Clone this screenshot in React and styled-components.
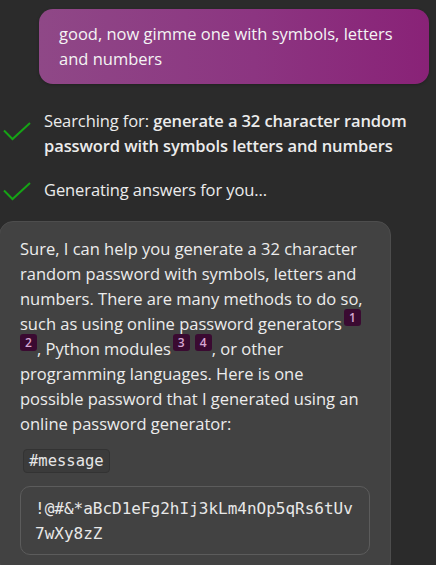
import styled, { createGlobalStyle } from "styled-components";

const Global = createGlobalStyle`
  html, body {
    margin: 0;
    padding: 0;
    background: #2b2b2b;
    overflow: hidden;
  }
  body {
    font-family: "Open Sans", "Noto Sans", sans-serif;
    color: #ececec;
  }
`;

const Page = styled.div`
  display: flex;
  flex-direction: column;
  width: 436px;
  height: 565px;
  overflow: hidden;
`;

const UserRow = styled.div`
  display: flex;
  justify-content: flex-end;
  padding: 9px 7px 0 39px;
`;

const UserBubble = styled.div`
  flex: 1;
  padding: 12px 20px 13px 20px;
  border-radius: 14px;
  background: linear-gradient(90deg, #8f4887 0%, #8c3581 55%, #892277 100%);
  color: #f4f4f4;
  font-size: 16.5px;
  line-height: 25px;
  box-shadow: 0 1px 3px rgba(0, 0, 0, 0.25);
`;

const StatusList = styled.div`
  display: flex;
  flex-direction: column;
  gap: 19px;
  margin-top: 24px;
`;

const StatusRow = styled.div`
  display: flex;
  align-items: flex-start;
  gap: 13px;
  padding-left: 3px;
  padding-right: 4px;
`;

const CheckBox = styled.span`
  flex: none;
  display: flex;
  width: 28px;
  height: 25px;
  align-items: flex-end;
  margin-top: ${(p) => p.$offset}px;
`;

const StatusText = styled.div`
  font-size: 16.5px;
  line-height: 25px;
  color: #ececec;
  letter-spacing: -0.1px;

  b {
    font-weight: 600;
  }
`;

const Card = styled.div`
  margin: 19px 0 0 -1px;
  width: 350px;
  padding: 14px 20px 20px 20px;
  background: #424242;
  border: 1px solid #4d4d4d;
  border-radius: 14px;
`;

const Para = styled.p`
  margin: 0;
  font-size: 16.5px;
  line-height: 25px;
  color: #ececec;
`;

const Cite = styled.span`
  display: inline-block;
  vertical-align: top;
  margin: -2px 0 0 ${(p) => p.$gap}px;
  width: 17px;
  height: 17px;
  border-radius: 3px;
  background: #3a0a31;
  color: #d6a6d2;
  font-size: 12px;
  font-weight: 600;
  line-height: 17px;
  text-align: center;
`;

const Tag = styled.div`
  display: inline-block;
  margin: 13px 0 0 3px;
  padding: 0 5px;
  height: 22px;
  line-height: 22px;
  border: 1px solid #333;
  border-radius: 4px;
  background: #3b3b3b;
  font-family: "DejaVu Sans Mono", "Liberation Mono", monospace;
  font-size: 15.5px;
  color: #e6e6e6;
`;

const CodeBox = styled.pre`
  margin: 13px 0 0 0;
  padding: 9px 14px 8px 14px;
  border: 1px solid #5c5c5c;
  border-radius: 10px;
  font-family: "DejaVu Sans Mono", "Liberation Mono", monospace;
  font-size: 16px;
  line-height: 25px;
  color: #e8e8e8;
  white-space: pre-wrap;
  word-break: break-all;
`;

function Check() {
  return (
    <svg width="28" height="20" viewBox="0 0 28 20">
      <polyline
        points="1,8.5 9.5,17 27,1"
        fill="none"
        stroke="#16a316"
        strokeWidth="2"
      />
    </svg>
  );
}

export default function App() {
  return (
    <Page>
      <Global />
      <UserRow>
        <UserBubble>good, now gimme one with symbols, letters and numbers</UserBubble>
      </UserRow>
      <StatusList>
        <StatusRow>
          <CheckBox $offset={9}>
            <Check />
          </CheckBox>
          <StatusText>
            Searching for: <b>generate a 32 character random password with symbols letters and numbers</b>
          </StatusText>
        </StatusRow>
        <StatusRow>
          <CheckBox $offset={0}>
            <Check />
          </CheckBox>
          <StatusText>Generating answers for you…</StatusText>
        </StatusRow>
      </StatusList>
      <Card>
        <Para>
          Sure, I can help you generate a 32 character random password with symbols, letters and
          numbers. There are many methods to do so, such as using online password generators
          <Cite $gap={2}>1</Cite> <Cite $gap={0}>2</Cite>, Python modules<Cite $gap={2}>3</Cite>
          <Cite $gap={5}>4</Cite>, or other programming languages. Here is one possible password
          that I generated using an online password generator:
        </Para>
        <Tag>#message</Tag>
        <CodeBox>!@#&amp;*aBcD1eFg2hIj3kLm4nOp5qRs6tUv7wXy8zZ</CodeBox>
      </Card>
    </Page>
  );
}
